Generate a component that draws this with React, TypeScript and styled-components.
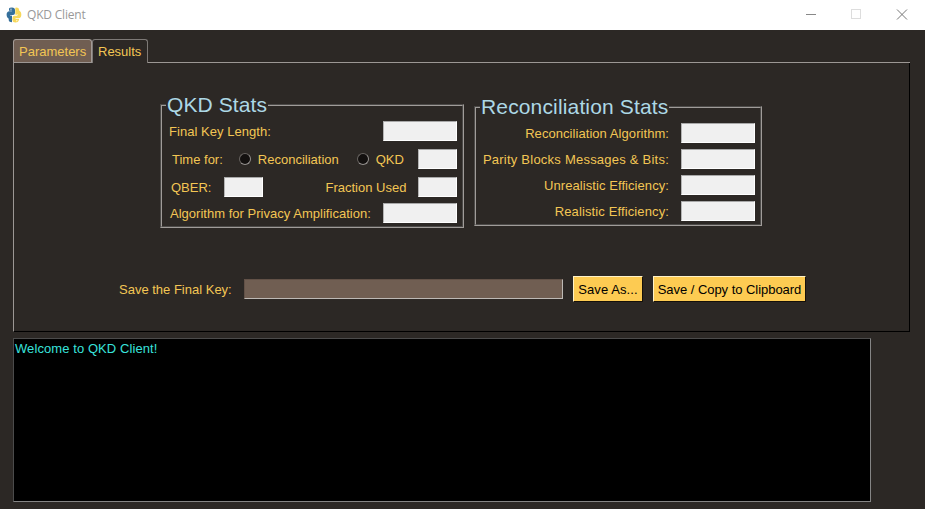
import React from "react";
import styled, { createGlobalStyle } from "styled-components";

const GlobalStyle = createGlobalStyle`
  * { box-sizing: border-box; }
  body { margin: 0; overflow: hidden; background: #2c2825; }
`;

const Window = styled.div`
  width: 925px;
  height: 509px;
  background: #2c2825;
  color: #f3c654;
  font: 13px/20px "Liberation Sans", Arial, sans-serif;
  white-space: nowrap;
`;

const TitleBar = styled.header`
  display: flex;
  align-items: center;
  height: 30px;
  padding: 0 17px 1px 6px;
  background: #fff;
`;

const Title = styled.span`
  flex: 1;
  margin-left: 5px;
  color: #999;
  font: 12px/28px "Open Sans", "Noto Sans", sans-serif;
  letter-spacing: -0.2px;
  padding-top: 1px;
`;

const Controls = styled.div`
  display: flex;
  gap: 34px;
  height: 27px;
  align-items: center;

  svg {
    overflow: visible;
  }
`;

const Body = styled.main`
  padding: 9px 0 0 13px;
`;

const TabBar = styled.nav`
  display: flex;
  height: 24px;
`;

const Tab = styled.div<{ $width: number; $active?: boolean }>`
  width: ${(p) => p.$width}px;
  height: ${(p) => (p.$active ? 24 : 23)}px;
  padding: 2px 0 0 5px;
  border: 1px solid ${(p) => (p.$active ? "#7d7976" : "#a39b96")};
  border-bottom: 0;
  border-radius: 3px 3px 0 0;
  background: ${(p) => (p.$active ? "#2c2825" : "#705e52")};
`;

const TabLine = styled.div`
  flex: 1;
  align-self: flex-end;
  height: 1px;
  margin-right: 15px;
  background: #9c9794;
`;

const Panel = styled.section`
  width: 897px;
  height: 269px;
  border: 1px solid #000;
  border-left-color: #9c9794;
  border-top: 0;
`;

const InactiveEdge = styled.div`
  width: 79px;
  height: 1px;
  margin-top: -1px;
  background: #9c9794;
`;

const Groups = styled.div`
  display: flex;
  align-items: flex-start;
  height: 190px;
  padding: 31px 0 0 146px;
  gap: 10px;
`;

const Group = styled.fieldset<{ $width: number; $height: number; $top: number }>`
  min-width: 0;
  width: ${(p) => p.$width}px;
  height: ${(p) => p.$height}px;
  margin: ${(p) => p.$top}px 0 0;
  padding: 0 5px 0 0;
  border: 2px groove #a09c99;
`;

const Legend = styled.legend<{ $spacing: number }>`
  margin-left: 4px;
  padding: 0 1px;
  color: #add8e6;
  font-size: 21px;
  line-height: 22px;
  letter-spacing: ${(p) => p.$spacing}px;
`;

const Row = styled.div<{ $top?: number; $end?: boolean }>`
  display: flex;
  align-items: center;
  height: 20px;
  margin-top: ${(p) => p.$top ?? 6}px;
  justify-content: ${(p) => (p.$end ? "flex-end" : "flex-start")};
`;

const Label = styled.label<{ $left?: number; $spacing?: number }>`
  height: 20px;
  margin-left: ${(p) => p.$left ?? 0}px;
  line-height: 22px;
  letter-spacing: ${(p) => p.$spacing ?? 0}px;
`;

const Field = styled.div<{ $width: number; $left?: number; $auto?: boolean }>`
  flex: none;
  width: ${(p) => p.$width}px;
  height: 20px;
  margin-left: ${(p) => (p.$auto ? "auto" : `${p.$left ?? 12}px`)};
  border: 1px solid #fff;
  border-top-color: #a8a8a8;
  border-left-color: #b4b4b4;
  background: #f0f0f0;
`;

const Radio = styled.span<{ $left: number }>`
  flex: none;
  width: 12px;
  height: 12px;
  margin-left: ${(p) => p.$left}px;
  border: 1px solid #94908e;
  border-top-color: #686461;
  border-left-color: #686461;
  border-radius: 50%;
  background: #13100f;
`;

const SaveRow = styled.div`
  display: flex;
  align-items: center;
  height: 26px;
  margin-top: 23px;
  padding-left: 105px;
`;

const KeyField = styled.div`
  width: 319px;
  height: 20px;
  border: 1px solid;
  border-color: #625147 #bdb9b5 #bdb9b5 #625147;
  background: #705e52;
`;

const SaveLabel = styled(Label)`
  width: 125px;
`;

const Button = styled.button<{ $width: number; $spacing?: number }>`
  width: ${(p) => p.$width}px;
  height: 26px;
  margin-left: 10px;
  padding: 1px 0 0;
  border: 1px solid;
  border-color: #fff2c7 #15100a #15100a #fff2c7;
  background: #fdcb52;
  color: #000;
  font: inherit;
  letter-spacing: ${(p) => p.$spacing ?? 0}px;
`;

const Output = styled.pre`
  width: 858px;
  height: 164px;
  margin: 6px 0 0;
  padding: 1px;
  border: 1px solid;
  border-color: #4b4b4b #858585 #858585 #4b4b4b;
  background: #000;
  color: #38e2dc;
  font: inherit;
  line-height: 18px;
  letter-spacing: 0.08px;
`;

const PythonIcon = () => (
  <svg width="16" height="16" viewBox="0 0 16 16">
    <path
      fill="#356f9b"
      d="M3 1.5Q3.4.5 6 .5Q9 .5 9 3V6Q9 8 7 8H5Q4 8 4 9.5V12Q.8 11.5.6 8Q.5 4.6 3 4.2H6V3.7H3Z"
    />
    <path
      fill="#f7d85b"
      d="M12 3.5Q15 3.8 15.3 7Q15.5 10.8 13 11.3H9.5V12H13V13Q12.4 15.5 9.5 15.5Q6.5 15.5 6.5 13V10.5Q6.5 8.7 8.5 8.7H10.5Q12 8.5 12 7Z"
    />
    <path fill="#f7d85b" d="M9.3.7Q13 .2 13.2 3V5.5Q13 7.5 11 7.7H9.3Z" />
    <path fill="#356f9b" d="M6 8.5V15.3Q3 15.2 2.7 13V10.5Q3 8.5 6 8.5Z" />
    <circle cx="5" cy="2.2" r=".6" fill="#fff" />
    <circle cx="10.8" cy="13.7" r=".6" fill="#fff" />
  </svg>
);

const reconciliationStats = [
  { label: "Reconciliation Algorithm:", spacing: 0.06 },
  { label: "Parity Blocks Messages & Bits:", spacing: 0.23 },
  { label: "Unrealistic Efficiency:", spacing: 0.07 },
  { label: "Realistic Efficiency:", spacing: 0.12 },
];

export default function App() {
  return (
    <Window>
      <GlobalStyle />
      <TitleBar>
        <PythonIcon />
        <Title>QKD Client</Title>
        <Controls>
          <svg width="11" height="11" viewBox="0 0 11 11">
            <path d="M-1 5.5H9" stroke="#888" />
          </svg>
          <svg width="11" height="11" viewBox="0 0 11 11">
            <rect x="-.5" y=".5" width="9" height="9" fill="none" stroke="#ddd" />
          </svg>
          <svg width="11" height="11" viewBox="0 0 11 11">
            <path d="M0 .5L10 10.5M10 .5L0 10.5" stroke="#777" />
          </svg>
        </Controls>
      </TitleBar>
      <Body>
        <TabBar>
          <Tab $width={79}>Parameters</Tab>
          <Tab $width={56} $active>Results</Tab>
          <TabLine />
        </TabBar>
        <InactiveEdge />
        <Panel>
          <Groups>
            <Group $width={304} $height={134} $top={0}>
              <Legend $spacing={0.1}>QKD Stats</Legend>
              <Row $top={5}>
                <Label $left={7} $spacing={0.04}>Final Key Length:</Label>
                <Field $width={74} $auto />
              </Row>
              <Row $top={8}>
                <Label $left={10}>Time for:</Label>
                <Radio $left={16} />
                <Label $left={7}>Reconciliation</Label>
                <Radio $left={18} />
                <Label $left={7}>QKD</Label>
                <Field $width={39} $auto />
              </Row>
              <Row $top={8}>
                <Label $left={9}>QBER:</Label>
                <Field $width={39} $left={13} />
                <Label $left={62}>Fraction Used</Label>
                <Field $width={39} $auto />
              </Row>
              <Row>
                <Label $left={8} $spacing={0.02}>Algorithm for Privacy Amplification:</Label>
                <Field $width={74} $auto />
              </Row>
            </Group>
            <Group $width={288} $height={130} $top={2}>
              <Legend $spacing={0.15}>Reconciliation Stats</Legend>
              {reconciliationStats.map(({ label, spacing }, i) => (
                <Row key={label} $top={i === 0 ? 5 : 6} $end>
                  <Label $spacing={spacing}>{label}</Label>
                  <Field $width={74} />
                </Row>
              ))}
            </Group>
          </Groups>
          <SaveRow>
            <SaveLabel>Save the Final Key:</SaveLabel>
            <KeyField />
            <Button $width={70} $spacing={0.1}>Save As...</Button>
            <Button $width={153} $spacing={-0.04}>Save / Copy to Clipboard</Button>
          </SaveRow>
        </Panel>
        <Output>Welcome to QKD Client!</Output>
      </Body>
    </Window>
  );
}
